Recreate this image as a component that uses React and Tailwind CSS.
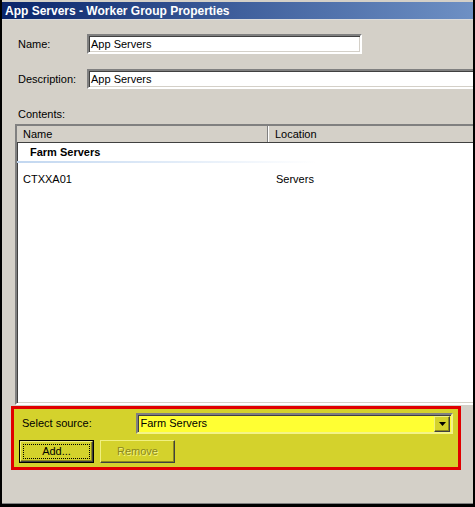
import React from "react";

const sunken =
  "border-2 border-t-[#808080] border-l-[#808080] border-b-white border-r-white shadow-[inset_1px_1px_0_#404040,inset_-1px_-1px_0_#d4d0c8]";

const App = () => {
  return (
    <div className="w-[475px] h-[507px] bg-[#d4d0c8] font-['Liberation_Sans',Arial,sans-serif] text-[11px] text-black">
      <div className="w-full h-full flex flex-col border-l-2 border-r-2 border-b-[3px] border-l-black border-r-black border-b-black overflow-hidden relative">
        {/* Title bar */}
        <div className="mt-[2px] h-[18px] shrink-0 flex items-center pl-[3px] bg-gradient-to-r from-[#0a246a] via-[#3f5f9c] to-[#6e90c4] border-b border-[#dcdcdc]">
          <span className="text-white font-bold text-[12px] leading-none">
            App Servers - Worker Group Properties
          </span>
        </div>

        {/* Name */}
        <div className="flex items-center mt-[14px] ml-[16px]">
          <label className="w-[69px] shrink-0">Name:</label>
          <div className={`w-[275px] shrink-0 h-[20px] bg-white flex items-center pl-[2px] ${sunken}`}>
            App Servers
          </div>
        </div>

        {/* Description */}
        <div className="flex items-center mt-[15px] ml-[16px]">
          <label className="w-[69px] shrink-0">Description:</label>
          <div className={`w-[400px] shrink-0 h-[20px] bg-white flex items-center pl-[2px] ${sunken}`}>
            App Servers
          </div>
        </div>

        {/* Contents */}
        <div className="ml-[16px] mt-[19px] leading-[13px]">Contents:</div>
        <div className={`ml-[13px] mt-[3px] w-[470px] shrink-0 h-[281px] bg-white flex flex-col ${sunken}`}>
          <div className="h-[17px] shrink-0 flex bg-[#d4d0c8] border-b border-[#404040]">
            <div className="w-[251px] flex items-center pl-[6px] border-r border-[#808080]">Name</div>
            <div className="flex-1 flex items-center pl-[6px] border-l border-white">Location</div>
          </div>
          <div className="h-[18px] flex items-center pl-[13px] font-bold">Farm Servers</div>
          <div className="h-[2px] w-[300px] bg-gradient-to-r from-[#c2d7f0] to-white"></div>
          <div className="flex items-center h-[16px] mt-[8px]">
            <div className="w-[253px] pl-[6px]">CTXXA01</div>
            <div className="pl-[6px]">Servers</div>
          </div>
        </div>

        {/* Highlighted source area */}
        <div className="ml-[9px] mt-[1px] w-[450px] h-[64px] border-[3px] border-[#e00000] bg-[#d4d22c] flex flex-col px-[5px] pt-[4px]">
          <div className="flex items-center">
            <span className="w-[118px] pl-[3px]">Select source:</span>
            <div className="w-[318px] h-[21px] flex items-center border-2 border-t-[#808080] border-l-[#808080] border-b-[#f4f488] border-r-[#f4f488] shadow-[inset_1px_1px_0_#404040] bg-[#ffff33]">
              <span className="flex-1 pl-[2px]">Farm Servers</span>
              <div className="w-[16px] h-[16px] mr-[1px] bg-[#d4d22c] flex items-center justify-center border border-t-[#f0f080] border-l-[#f0f080] border-b-[#404040] border-r-[#404040] shadow-[inset_-1px_-1px_0_#8a8820]">
                <svg width="7" height="4" viewBox="0 0 7 4">
                  <path d="M0 0H7L3.5 4Z" fill="#000" />
                </svg>
              </div>
            </div>
          </div>
          <div className="flex gap-[6px] mt-[6px]">
            <button className="w-[75px] h-[23px] border border-black bg-[#d4d22c] p-0">
              <div className="w-full h-full border border-t-[#f0f080] border-l-[#f0f080] border-b-[#404040] border-r-[#404040] shadow-[inset_-1px_-1px_0_#8a8820] flex items-center justify-center p-[2px]">
                <div className="w-full h-full border border-dotted border-black flex items-center justify-center">
                  Add...
                </div>
              </div>
            </button>
            <button className="w-[75px] h-[23px] bg-[#d4d22c] p-0 border border-t-[#f0f080] border-l-[#f0f080] border-b-[#404040] border-r-[#404040] shadow-[inset_-1px_-1px_0_#8a8820] flex items-center justify-center">
              <span className="text-[#8a8820] [text-shadow:1px_1px_0_#f4f488]">Remove</span>
            </button>
          </div>
        </div>

        <div className="flex-1"></div>
        <div className="h-[1px] bg-[#808080]"></div>
      </div>
    </div>
  );
};

export default App;
